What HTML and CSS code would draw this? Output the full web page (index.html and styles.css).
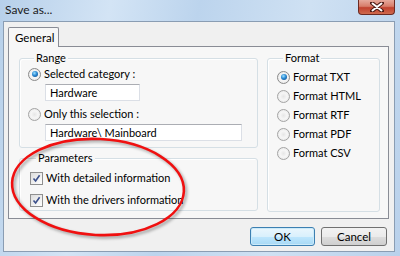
FILE: index.html
```html
<!DOCTYPE html>
<html>
<head>
<meta charset="utf-8">
<link rel="stylesheet" href="styles.css">
</head>
<body>
<div class="window">
  <div class="titlebar">
    <span class="title">Save as...</span>
    <span class="close">
      <svg width="14" height="10" viewBox="0 0 14 10"><path d="M2 1 L12 9 M12 1 L2 9" stroke="#4a1a14" stroke-width="4" stroke-linecap="round"/><path d="M2.5 1.5 L11.5 8.5 M11.5 1.5 L2.5 8.5" stroke="#ffffff" stroke-width="2" stroke-linecap="round"/></svg>
    </span>
  </div>
  <div class="client">
    <div class="tabs"><div class="tab">General</div></div>
    <div class="panel">
      <div class="leftcol">
        <div class="group range">
          <div class="legend">Range</div>
          <div class="opt first"><span class="radio on"></span>Selected category :</div>
          <div class="field short">Hardware</div>
          <div class="opt second"><span class="radio"></span>Only this selection :</div>
          <div class="field long">Hardware\ Mainboard</div>
        </div>
        <div class="group params">
          <div class="legend">Parameters</div>
          <div class="opt chk first"><span class="check"><svg width="9" height="9" viewBox="0 0 9 9"><path d="M1.5 4.5 L3.6 7 L7.6 1.2" fill="none" stroke="#3b4f8a" stroke-width="1.6"/></svg></span>With detailed information</div>
          <div class="opt chk second"><span class="check"><svg width="9" height="9" viewBox="0 0 9 9"><path d="M1.5 4.5 L3.6 7 L7.6 1.2" fill="none" stroke="#3b4f8a" stroke-width="1.6"/></svg></span>With the drivers information</div>
        </div>
      </div>
      <div class="group format">
        <div class="legend">Format</div>
        <div class="fopt first"><span class="radio on"></span>Format TXT</div>
        <div class="fopt"><span class="radio"></span>Format HTML</div>
        <div class="fopt"><span class="radio"></span>Format RTF</div>
        <div class="fopt"><span class="radio"></span>Format PDF</div>
        <div class="fopt"><span class="radio"></span>Format CSV</div>
      </div>
    </div>
    <div class="buttons">
      <div class="btn default">OK</div>
      <div class="btn">Cancel</div>
    </div>
  </div>
  <svg class="annot" width="400" height="256" viewBox="0 0 400 256">
    <ellipse cx="98" cy="187" rx="86" ry="48" transform="rotate(3 98 187)" fill="none" stroke="#f01010" stroke-width="2.6"/>
  </svg>
</div>
</body>
</html>
```
FILE: styles.css
```css
* { box-sizing: border-box; }
html, body { margin: 0; padding: 0; }
body {
  width: 400px;
  height: 256px;
  overflow: hidden;
  font-family: "Lato", "Noto Sans", sans-serif;
  font-size: 11px;
  color: #000;
}
.window {
  position: relative;
  width: 400px;
  height: 256px;
  background: linear-gradient(100deg, #b7d0ea 0%, #d3e4f5 25%, #bcd4ed 45%, #cfe1f3 70%, #b9d1eb 100%);
  display: flex;
  flex-direction: column;
}
.titlebar {
  height: 21px;
  display: flex;
  align-items: flex-start;
}
.title {
  padding: 3px 0 0 5px;
  font-size: 12px;
  line-height: 14px;
  color: #1b1b1b;
}
.close {
  margin-left: auto;
  margin-right: 5px;
  width: 37px;
  height: 15px;
  border: 1px solid #6b2a22;
  border-top: none;
  border-radius: 0 0 4px 4px;
  background: linear-gradient(#e6a99c 0%, #d77d6a 45%, #c1412e 55%, #cf6a4e 100%);
  display: flex;
  align-items: center;
  justify-content: center;
}
.close svg { display: block; }
.client {
  margin: 0 5px 0 3px;
  border: 1px solid #8a9db3;
  background: #f0f0f0;
  padding: 5px 5px 5px 4px;
  display: flex;
  flex-direction: column;
}
.tabs { display: flex; height: 19px; }
.tab {
  position: relative;
  z-index: 1;
  width: 51px;
  height: 20px;
  border: 1px solid #898c95;
  border-bottom: none;
  background: #f7f7f7;
  border-radius: 2px 2px 0 0;
  padding: 2px 0 0 6px;
  line-height: 15px;
  font-size: 11.5px;
}
.panel {
  height: 173px;
  border: 1px solid #898c95;
  background: #f7f7f7;
  padding: 11px 0 0 10px;
  display: flex;
  gap: 9px;
}
.leftcol {
  width: 239px;
  display: flex;
  flex-direction: column;
  gap: 10px;
}
.group {
  border: 1px solid #d5dfe5;
  border-radius: 3px;
  box-shadow: inset 1px 1px 0 #ffffff;
}
.legend {
  width: fit-content;
  height: 14px;
  line-height: 14px;
  margin: -8px 0 0 6px;
  padding: 0 2px;
  background: #f7f7f7;
  color: #000;
}
.range { height: 90px; padding-left: 8px; }
.params { height: 53px; padding-left: 10px; }
.format { width: 113px; height: 154px; padding-left: 9px; }
.opt, .fopt {
  display: flex;
  align-items: center;
  height: 16px;
  line-height: 16px;
  white-space: nowrap;
}
.range .first { margin-top: 1px; }
.range .second { margin-top: 5px; }
.params .first { margin-top: 5px; }
.params .second { margin-top: 6px; }
.fopt { margin-top: 3px; }
.fopt.first { margin-top: 4px; }
.radio {
  width: 13px;
  height: 13px;
  border-radius: 50%;
  border: 1px solid #a4a4a4;
  background: radial-gradient(circle at 50% 50%, #e6e6e6 0, #f6f6f6 45%, #ececec 70%, #d0d0d0 100%);
  margin-right: 3px;
  flex: none;
  display: flex;
  align-items: center;
  justify-content: center;
}
.radio.on { border-color: #8a8a8a; }
.radio.on::after {
  content: "";
  width: 6px;
  height: 6px;
  border-radius: 50%;
  background: radial-gradient(circle at 40% 35%, #9fe2ff 0, #2a8ad4 45%, #0b3f7a 100%);
}
.check {
  width: 13px;
  height: 13px;
  border: 1px solid #8f8f8f;
  background: linear-gradient(135deg, #dcdcdc, #ffffff);
  margin-right: 3px;
  flex: none;
  display: flex;
  align-items: center;
  justify-content: center;
}
.check svg { display: block; }
.field {
  height: 17px;
  margin-left: 17px;
  margin-top: 2px;
  background: #fff;
  border: 1px solid #dbdfe6;
  border-top-color: #abadb3;
  padding-left: 4px;
  line-height: 15px;
}
.short { width: 95px; }
.long { width: 197px; }
.buttons {
  display: flex;
  justify-content: flex-end;
  gap: 6px;
  margin-top: 8px;
  padding-right: 2px;
}
.btn {
  width: 66px;
  height: 19px;
  border: 1px solid #707070;
  border-radius: 3px;
  background: linear-gradient(#f2f2f2 0%, #ebebeb 50%, #dddddd 51%, #cfcfcf 100%);
  text-align: center;
  line-height: 17px;
  font-size: 11.5px;
}
.btn.default {
  width: 65px;
  border-color: #3c7fb1;
  background: linear-gradient(#eaf6fd 0%, #d9f0fc 50%, #bee6fd 51%, #a7d9f5 100%);
  box-shadow: inset 0 0 0 1px #cbeaf9;
}
.annot {
  position: absolute;
  left: 0;
  top: 0;
  pointer-events: none;
  filter: drop-shadow(2px 2px 1.5px rgba(0,0,0,0.35));
}
```
